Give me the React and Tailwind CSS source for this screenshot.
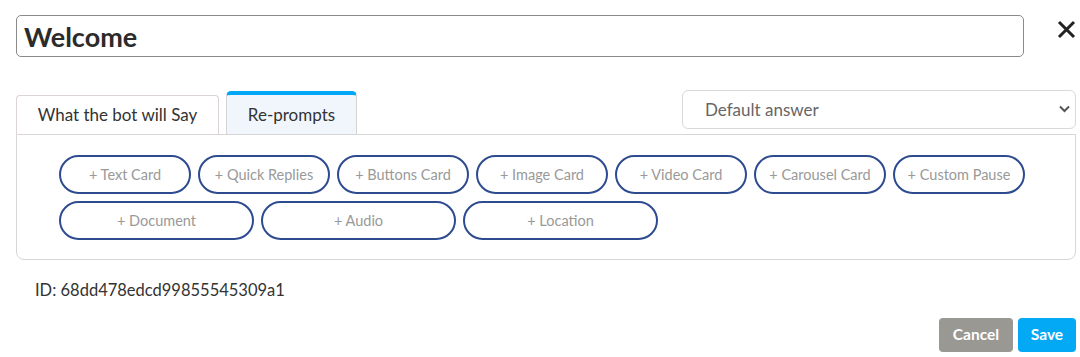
import { useState } from "react";

const rowOne = [
  "Text Card",
  "Quick Replies",
  "Buttons Card",
  "Image Card",
  "Video Card",
  "Carousel Card",
  "Custom Pause",
];
const rowTwo = ["Document", "Audio", "Location"];

const CardButton = ({ label, wide }) => (
  <button
    className={`h-[39px] rounded-full border-2 border-[#2d4b8e] bg-white text-[14.5px] text-[#999999] ${
      wide ? "w-[195px]" : "w-[132px]"
    }`}
  >
    + {label}
  </button>
);

export default function App() {
  const [tab, setTab] = useState("reprompts");
  const [title, setTitle] = useState("Welcome");

  return (
    <div className="w-[1080px] h-[357px] bg-white pl-4 pr-[4px] pt-[15px] font-['Lato','Liberation_Sans',sans-serif] text-[#333333]">
      {/* Title row */}
      <div className="flex items-center">
        <input
          className="h-[42px] w-[1008px] rounded-[5px] border border-[#8a8a8a] px-[7px] text-[27px] font-bold text-[#2b2b2b] outline-none"
          value={title}
          onChange={(e) => setTitle(e.target.value)}
        />
        <button className="ml-auto -mt-[14px] text-[#222222]">
          <svg width="19" height="19" viewBox="0 0 19 19">
            <path
              d="M2 2 L17 17 M17 2 L2 17"
              stroke="currentColor"
              strokeWidth="3"
              strokeLinecap="butt"
            />
          </svg>
        </button>
      </div>

      {/* Tabs + select */}
      <div className="mt-[33px] flex items-end">
        <button
          onClick={() => setTab("say")}
          className="h-[39px] w-[203px] rounded-t-[4px] border border-b-0 border-[#dcd3d4] bg-white text-[17px] text-[#333333]"
        >
          What the bot will Say
        </button>
        <button
          onClick={() => setTab("reprompts")}
          className="ml-[7px] h-[43px] w-[131px] rounded-t-[5px] border-x border-[#d5d5d5] border-t-4 border-t-[#00a8f7] bg-[#f1f6fd] text-[17px] text-[#333333]"
        >
          Re-prompts
        </button>
        <div className="relative mb-[5px] ml-auto w-[394px]">
          <select className="h-[39px] w-full appearance-none rounded-[6px] border border-[#d9d9d9] bg-white pl-[22px] text-[17px] text-[#666666] outline-none">
            <option>Default answer</option>
          </select>
          <svg
            className="pointer-events-none absolute right-[6px] top-[15px]"
            width="11"
            height="8"
            viewBox="0 0 11 8"
          >
            <path d="M1 1.5 L5.5 6 L10 1.5" fill="none" stroke="#555555" strokeWidth="2" />
          </svg>
        </div>
      </div>

      {/* Panel */}
      <div className="rounded-b-[8px] border border-[#d6d6d6] pl-[42px] pt-[20px] pb-[19px]">
        <div className="flex flex-col gap-[7px]">
          <div className="flex gap-[7px]">
            {rowOne.map((l) => (
              <CardButton key={l} label={l} />
            ))}
          </div>
          <div className="flex gap-[7px]">
            {rowTwo.map((l) => (
              <CardButton key={l} label={l} wide />
            ))}
          </div>
        </div>
      </div>

      <div className="mt-[18px] pl-[19px] text-[16.5px] text-[#333333]">
        ID: 68dd478edcd99855545309a1
      </div>

      <div className="mt-[15px] flex justify-end gap-[5px]">
        <button className="h-[34px] w-[74px] rounded-[4px] bg-[#999893] text-[15.5px] font-bold text-white">
          Cancel
        </button>
        <button className="h-[34px] w-[58px] rounded-[4px] bg-[#03a9f4] text-[15.5px] font-bold text-white">
          Save
        </button>
      </div>
    </div>
  );
}
